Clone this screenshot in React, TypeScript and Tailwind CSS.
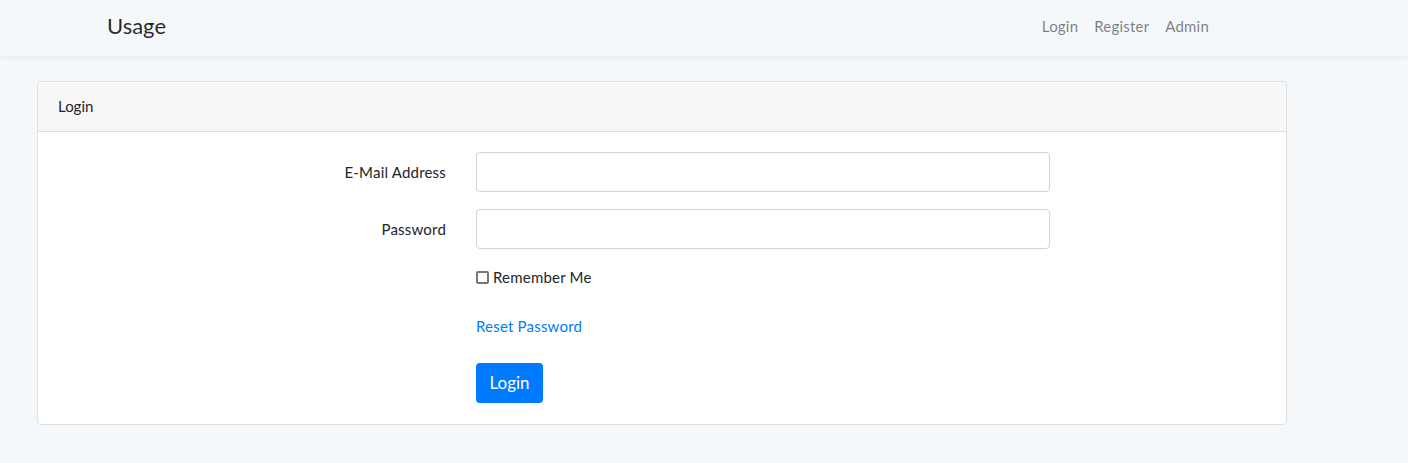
import { useState } from 'react';

export default function App() {
  const [remember, setRemember] = useState(false);

  return (
    <div className="min-h-[463px] bg-[#f5f8fa] font-['Lato',sans-serif] text-[15px] text-[#212529]">
      {/* Navbar */}
      <nav className="h-[57px] bg-[#f5f8fa] shadow-[0_2px_4px_rgba(0,0,0,0.04)] border-b border-[#eef0f2]">
        <div className="flex items-center h-full w-[1140px] ml-[92px] px-[15px]">
          <a href="#" className="text-[22px] text-[rgba(0,0,0,0.85)] leading-none -mt-[5px]">Usage</a>
          <ul className="ml-auto flex items-center gap-[16px] -mt-[3px] mr-[8px]">
            <li><a href="#" className="text-[rgba(0,0,0,0.5)] tracking-[0.2px]">Login</a></li>
            <li><a href="#" className="text-[rgba(0,0,0,0.5)] tracking-[0.2px]">Register</a></li>
            <li><a href="#" className="text-[rgba(0,0,0,0.5)] tracking-[0.2px]">Admin</a></li>
          </ul>
        </div>
      </nav>

      <main className="pt-[24px] pl-[37px]">
        <div className="w-[1250px] bg-white border border-[#dfdfdf] rounded-[4px]">
          {/* Card Header */}
          <div className="h-[50px] flex items-center px-[20px] bg-[#f7f7f7] border-b border-[#dfdfdf] rounded-t-[4px]">
            Login
          </div>

          {/* Card Body */}
          <form className="px-[20px] pt-[20px] pb-[21px]" onSubmit={(e) => e.preventDefault()}>
            <div className="flex items-center mb-[17px]">
              <label className="w-[388px] text-right tracking-[0.2px]">E-Mail Address</label>
              <input type="email" className="ml-[30px] w-[574px] h-[40px] border border-[#ced4da] rounded-[4px] px-3 outline-none" />
            </div>
            <div className="flex items-center mb-[17px]">
              <label className="w-[388px] text-right tracking-[0.2px]">Password</label>
              <input type="password" className="ml-[30px] w-[574px] h-[40px] border border-[#ced4da] rounded-[4px] px-3 outline-none" />
            </div>
            <div className="flex items-center h-[22px] ml-[418px] mb-[19px] mt-[17px]">
              <label className="flex items-center gap-[4px] cursor-pointer">
                <span
                  onClick={() => setRemember(!remember)}
                  className="w-[13px] h-[13px] border-2 border-[#767676] rounded-[2px] bg-white"
                >
                  {remember && <span className="block w-full h-full bg-[#007bff]" />}
                </span>
                <span className="tracking-[0.2px]">Remember Me</span>
              </label>
            </div>
            <div className="flex items-center h-[38px] ml-[418px] mb-[18px]">
              <a href="#" className="text-[#007bff] text-[15px] tracking-[0.2px]">Reset Password</a>
            </div>
            <div className="ml-[418px]">
              <button type="submit" className="w-[67px] h-[40px] bg-[#007bff] text-white text-[17px] rounded-[4px]">
                Login
              </button>
            </div>
          </form>
        </div>
      </main>
    </div>
  );
}
